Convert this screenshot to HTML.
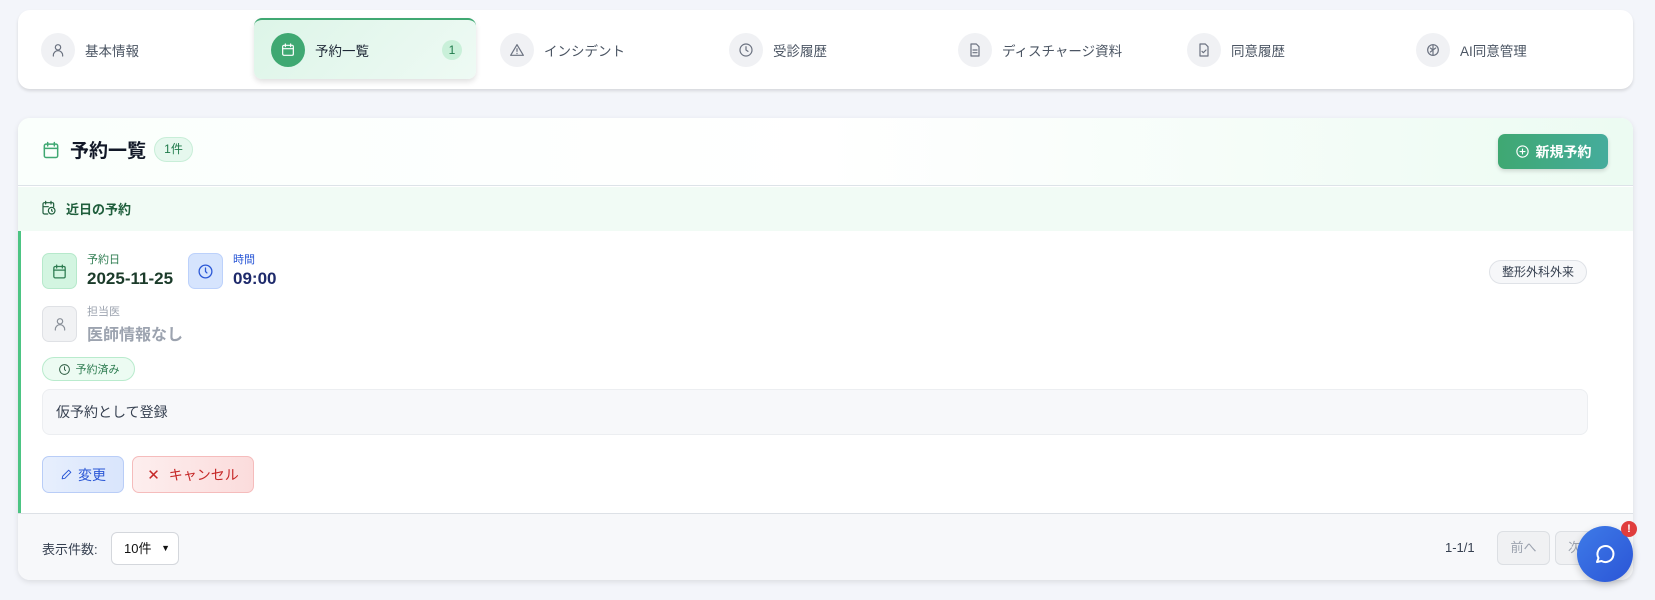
<!DOCTYPE html>
<html><head><meta charset="utf-8"><style>
*{box-sizing:border-box;margin:0;padding:0}
body{width:1655px;height:600px;background:#f3f5fa;font-family:"Liberation Sans","Noto Sans CJK JP",sans-serif;position:relative;overflow:hidden;color:#374151}
.abs{position:absolute}
.nav{left:18px;top:10px;width:1615px;height:79px;background:#fff;border-radius:12px;box-shadow:0 2px 3px rgba(0,0,0,.12)}
.tab{position:absolute;top:0;height:79px;display:flex;align-items:center;font-size:13.5px;color:#4b5563}
.ic{width:34px;height:34px;border-radius:50%;background:#f0f1f4;display:flex;align-items:center;justify-content:center;margin-right:10px}
.ic svg{width:16px;height:16px;fill:none;stroke:#6b7280;stroke-width:1.8;stroke-linecap:round;stroke-linejoin:round}
.active{left:236px;top:8px;width:222px;height:61px;border-radius:8px;background:linear-gradient(135deg,#ddf5e8,#eefaf4);border-top:2px solid #3fa872;box-shadow:0 3px 6px rgba(0,0,0,.12)}
.card{left:18px;top:118px;width:1615px;height:462px;background:#fff;border-radius:12px;box-shadow:0 2px 6px rgba(0,0,0,.1);overflow:hidden}
svg.s{fill:none;stroke-linecap:round;stroke-linejoin:round;stroke-width:1.8}
</style></head><body>
<div class="abs nav">
 <div class="tab" style="left:23px"><div class="ic"><svg viewBox="0 0 24 24"><circle cx="12" cy="8" r="4"/><path d="M5 21v-1a7 7 0 0 1 14 0v1"/></svg></div>基本情報</div>
 <div class="abs active"></div>
 <div class="tab" style="left:253px"><div class="ic" style="background:#3fa872"><svg viewBox="0 0 24 24" style="stroke:#fff"><rect x="4" y="5" width="16" height="15" rx="2"/><path d="M8 3v4M16 3v4M4 10h16"/></svg></div><span style="color:#1f2937">予約一覧</span><span style="position:absolute;left:171px;width:20px;height:20px;border-radius:50%;background:#c9f0d9;color:#1f7a4a;font-size:12px;text-align:center;line-height:20px">1</span></div>
 <div class="tab" style="left:482px"><div class="ic"><svg viewBox="0 0 24 24"><path d="M12 4 2.5 20h19z"/><path d="M12 10v4M12 17v.5"/></svg></div>インシデント</div>
 <div class="tab" style="left:711px"><div class="ic"><svg viewBox="0 0 24 24"><circle cx="12" cy="12" r="9"/><path d="M12 7v5l3 2"/></svg></div>受診履歴</div>
 <div class="tab" style="left:940px"><div class="ic"><svg viewBox="0 0 24 24"><path d="M6 3h8l4 4v14H6z"/><path d="M9 12h6M9 16h6"/></svg></div>ディスチャージ資料</div>
 <div class="tab" style="left:1169px"><div class="ic"><svg viewBox="0 0 24 24"><path d="M6 3h8l4 4v14H6z"/><path d="M9 14l2 2 4-4"/></svg></div>同意履歴</div>
 <div class="tab" style="left:1398px"><div class="ic"><svg viewBox="0 0 24 24"><circle cx="12" cy="12" r="8"/><path d="M12 4v16M8 9l4 3 4-3M8 15l4-3"/></svg></div><span style="color:#4b5563">AI同意管理</span></div>
</div>
<div class="abs card">
 <div class="abs" style="left:0;top:0;width:1615px;height:68px;background:linear-gradient(90deg,#fafffc,#fff 50%,#ecfbf2);border-bottom:1px solid #dde3e8"></div>
 <svg class="s abs" style="left:23px;top:22px;stroke:#3fa872" width="20" height="20" viewBox="0 0 24 24"><rect x="4" y="5" width="16" height="16" rx="2"/><path d="M8 3v4M16 3v4M4 10h16"/></svg>
 <div class="abs" style="left:52px;top:18px;font-size:19px;font-weight:bold;color:#111827">予約一覧</div>
 <div class="abs" style="left:136px;top:19px;width:39px;height:25px;border-radius:13px;background:#e6f8ee;border:1px solid #c8eed8;font-size:12px;color:#1f7a4a;text-align:center;line-height:23px">1件</div>
 <div class="abs" style="left:1480px;top:16px;width:110px;height:35px;border-radius:7px;background:linear-gradient(90deg,#3fa872,#45ac9c);color:#fff;font-size:14px;font-weight:bold;display:flex;align-items:center;justify-content:center;gap:6px;box-shadow:0 2px 4px rgba(0,0,0,.15)"><svg class="s" style="stroke:#fff" width="15" height="15" viewBox="0 0 24 24"><circle cx="12" cy="12" r="9"/><path d="M12 8v8M8 12h8"/></svg>新規予約</div>
 <div class="abs" style="left:0;top:69px;width:1615px;height:44px;background:#f1fbf5"></div>
 <svg class="s abs" style="left:23px;top:82px;stroke:#1f5e3c" width="16" height="16" viewBox="0 0 24 24"><path d="M10 21H5a2 2 0 0 1-2-2V6a2 2 0 0 1 2-2h12a2 2 0 0 1 2 2v4M7 2v4M15 2v4M3 10h8"/><circle cx="16" cy="16" r="5"/><path d="M16 14v2l1 1"/></svg>
 <div class="abs" style="left:48px;top:81px;font-size:13px;font-weight:bold;color:#1f5e3c">近日の予約</div>
 <div class="abs" style="left:0;top:113px;width:3px;height:282px;background:#4cc483"></div>
 <div class="abs" style="left:24px;top:135px;width:35px;height:36px;border-radius:7px;background:#d3f5e1;border:1px solid #b6e9cb;display:flex;align-items:center;justify-content:center"><svg class="s" style="stroke:#2f7d52" width="17" height="17" viewBox="0 0 24 24"><rect x="4" y="5" width="16" height="16" rx="2"/><path d="M8 3v4M16 3v4M4 10h16"/></svg></div>
 <div class="abs" style="left:69px;top:133px;font-size:11px;color:#2f7d52">予約日</div>
 <div class="abs" style="left:69px;top:151px;font-size:17px;font-weight:bold;color:#1b3b2a">2025-11-25</div>
 <div class="abs" style="left:170px;top:135px;width:35px;height:36px;border-radius:7px;background:#d6e4fd;border:1px solid #bcd1fb;display:flex;align-items:center;justify-content:center"><svg class="s" style="stroke:#2a57d6" width="17" height="17" viewBox="0 0 24 24"><circle cx="12" cy="12" r="9"/><path d="M12 7v5l2 2"/></svg></div>
 <div class="abs" style="left:215px;top:133px;font-size:11px;color:#2a57d6">時間</div>
 <div class="abs" style="left:215px;top:151px;font-size:17px;font-weight:bold;color:#1e2a6b">09:00</div>
 <div class="abs" style="left:1471px;top:142px;width:98px;height:24px;border-radius:12px;background:#f6f7f9;border:1px solid #dfe2e7;font-size:12px;color:#374151;text-align:center;line-height:22px">整形外科外来</div>
 <div class="abs" style="left:24px;top:188px;width:35px;height:36px;border-radius:7px;background:#f1f2f4;border:1px solid #dfe1e5;display:flex;align-items:center;justify-content:center"><svg class="s" style="stroke:#8a9099" width="16" height="16" viewBox="0 0 24 24"><circle cx="12" cy="8" r="4"/><path d="M5 21v-1a7 7 0 0 1 14 0v1"/></svg></div>
 <div class="abs" style="left:69px;top:185px;font-size:11px;color:#9ca3af">担当医</div>
 <div class="abs" style="left:69px;top:203px;font-size:16px;font-weight:bold;color:#9ca3af">医師情報なし</div>
 <div class="abs" style="left:24px;top:239px;width:93px;height:24px;border-radius:12px;background:#ecfbf2;border:1px solid #b9ebcd;font-size:11px;color:#2f7d52;display:flex;align-items:center;justify-content:center;gap:5px"><svg class="s" style="stroke:#2f5e44" width="13" height="13" viewBox="0 0 24 24"><circle cx="12" cy="12" r="9"/><path d="M12 7v5l2 2"/></svg>予約済み</div>
 <div class="abs" style="left:24px;top:271px;width:1546px;height:46px;border-radius:8px;background:#f7f8fa;border:1px solid #eceef1;font-size:14px;color:#374151;padding-left:13px;line-height:44px">仮予約として登録</div>
 <div class="abs" style="left:24px;top:338px;width:82px;height:37px;border-radius:7px;background:linear-gradient(90deg,#e7effd,#d9e5fc);border:1px solid #b9cdf7;color:#2a57d6;font-size:14px;display:flex;align-items:center;justify-content:center;gap:5px"><svg class="s" style="stroke:#2a57d6" width="13" height="13" viewBox="0 0 24 24"><path d="M4 20l1-5L16 4l4 4L9 19z"/></svg>変更</div>
 <div class="abs" style="left:114px;top:338px;width:122px;height:37px;border-radius:7px;background:linear-gradient(90deg,#fdeeee,#fbdcdc);border:1px solid #f5bcbc;color:#c62828;font-size:14px;display:flex;align-items:center;justify-content:center;gap:9px"><span style="font-size:15px">✕</span>キャンセル</div>
 <div class="abs" style="left:0;top:395px;width:1615px;height:67px;background:#f7f8fa;border-top:1px solid #dde1e6"></div>
 <div class="abs" style="left:24px;top:421px;font-size:13px;color:#374151">表示件数:</div>
 <div class="abs" style="left:93px;top:414px;width:68px;height:33px;border-radius:6px;background:#fff;border:1px solid #d4d7dc;font-size:13px;color:#111;padding-left:12px;line-height:31px">10件<span style="position:absolute;right:8px;font-size:9px">▼</span></div>
 <div class="abs" style="left:1427px;top:422px;font-size:13px;color:#374151">1-1/1</div>
 <div class="abs" style="left:1479px;top:413px;width:53px;height:34px;border-radius:6px;background:#f0f1f3;border:1px solid #dcdfe3;font-size:13px;color:#9ca3af;text-align:center;line-height:32px">前へ</div>
 <div class="abs" style="left:1537px;top:413px;width:53px;height:34px;border-radius:6px;background:#f0f1f3;border:1px solid #dcdfe3;font-size:13px;color:#9ca3af;padding-left:12px;line-height:32px">次へ</div>
</div>
<div class="abs" style="left:1577px;top:526px;width:56px;height:56px;border-radius:50%;background:linear-gradient(135deg,#3e7be8,#2b55d6);box-shadow:0 3px 8px rgba(0,0,0,.2);display:flex;align-items:center;justify-content:center"><svg class="s" style="stroke:#fff;stroke-width:2" width="24" height="24" viewBox="0 0 24 24"><path d="M4 20l1.5-4A8 8 0 1 1 8.5 19z"/></svg></div>
<div class="abs" style="left:1621px;top:521px;width:16px;height:16px;border-radius:50%;background:#e03d3d;color:#fff;font-size:11px;font-weight:bold;text-align:center;line-height:16px">!</div>
</body></html>
